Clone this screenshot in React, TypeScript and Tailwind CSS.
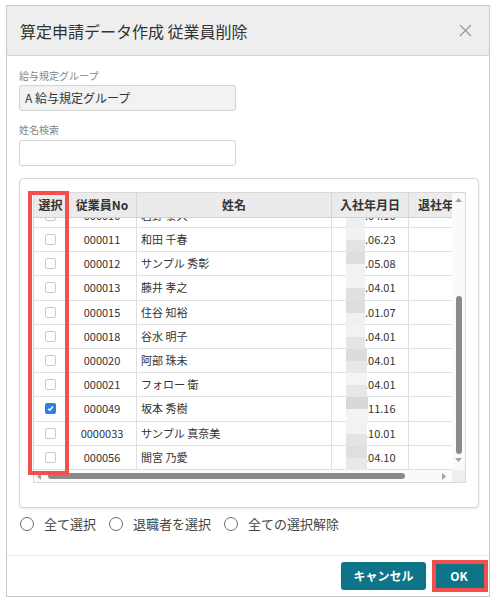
import React from "react";

const rows = [
  { no: "000010", name: "岩野 泰久", date: ".04.10", checked: false, shade: ["#e2e2e2", "#efefef"], bw: 19 },
  { no: "000011", name: "和田 千春", date: ".06.23", checked: false, shade: ["#f1f1f1", "#e3e3e3"], bw: 19 },
  { no: "000012", name: "サンプル 秀彰", date: ".05.08", checked: false, shade: ["#dedede", "#f2f2f2"], bw: 19 },
  { no: "000013", name: "藤井 孝之", date: ".04.01", checked: false, shade: ["#f3f3f3", "#e0e0e0"], bw: 19 },
  { no: "000015", name: "住谷 知裕", date: ".01.07", checked: false, shade: ["#dddddd", "#f0f0f0"], bw: 19 },
  { no: "000018", name: "谷水 明子", date: ".04.01", checked: false, shade: ["#f2f2f2", "#e4e4e4"], bw: 19 },
  { no: "000020", name: "阿部 珠未", date: ".04.01", checked: false, shade: ["#dcdcdc", "#e8e8e8"], bw: 21 },
  { no: "000021", name: "フォロー 衛", date: ".04.01", checked: false, shade: ["#f4f4f4", "#e6e6e6"], bw: 21 },
  { no: "000049", name: "坂本 秀樹", date: ".11.16", checked: true, shade: ["#d8d8d8", "#f3f3f3"], bw: 22 },
  { no: "0000033", name: "サンプル 真奈美", date: ".10.01", checked: false, shade: ["#f2f2f2", "#e4e4e4"], bw: 21 },
  { no: "000056", name: "間宮 乃愛", date: ".04.10", checked: false, shade: ["#dfdfdf", "#e9e9e9"], bw: 21 },
];

function Checkbox({ checked }: { checked: boolean }) {
  if (checked) {
    return (
      <span className="flex h-[11px] w-[11px] items-center justify-center rounded-[2px] bg-[#2d7fe6]">
        <svg width="7" height="7" viewBox="0 0 8 8">
          <path d="M1.2 4.2 L3.2 6 L6.8 1.8" fill="none" stroke="#fff" strokeWidth="1.6" />
        </svg>
      </span>
    );
  }
  return <span className="block h-[11px] w-[11px] rounded-[2px] border border-[#cacaca] bg-white" />;
}

function Radio({ label }: { label: string }) {
  return (
    <label className="flex items-center gap-[10px]">
      <span className="block h-[14px] w-[14px] rounded-full border border-[#6b6b6b] bg-white" />
      <span className="text-[13px] leading-4 text-[#444]">{label}</span>
    </label>
  );
}

export default function App() {
  const cols = "grid grid-cols-[34px_69px_195px_77px_43px]";
  return (
    <div className="relative h-[603px] w-[496px] bg-white px-[6px] pt-[5px] font-['Noto_Sans_CJK_JP',sans-serif] text-[#333]">
      <div className="flex h-[592px] w-[484px] flex-col border border-[#c9c9c9]">
        {/* header */}
        <div className="flex h-[50px] shrink-0 items-center justify-between border-b border-[#d4d4d4] bg-[#eeeeee] pl-[13px] pr-[17px]">
          <h1 className="text-[16px] leading-6 font-normal text-[#333]">算定申請データ作成 従業員削除</h1>
          <svg width="13" height="13" viewBox="0 0 13 13">
            <path d="M1 1 L12 12 M12 1 L1 12" stroke="#9a9a9a" strokeWidth="1.3" />
          </svg>
        </div>

        {/* body */}
        <div className="flex-1 pl-[12px] pr-[10px] pt-[13px]">
          <div className="text-[10px] leading-[14px] text-[#888]">給与規定グループ</div>
          <div className="mt-[2px] flex h-[26px] w-[217px] items-center rounded-[3px] border border-[#d2d2d2] bg-[#f2f2f2] px-[5px] text-[12px]">
            A 給与規定グループ
          </div>
          <div className="mt-[12px] text-[10px] leading-[14px] text-[#888]">姓名検索</div>
          <div className="mt-[3px] h-[26px] w-[217px] rounded-[3px] border border-[#d2d2d2] bg-white" />

          {/* table panel */}
          <div className="mt-[12px] h-[330px] w-[460px] rounded-[4px] border border-[#d6d6d6] pl-[13px] pt-[13px] shadow-[0_1px_2px_rgba(0,0,0,0.08)]">
            <div className="flex h-[291px] w-[433px] flex-col border border-[#d9d9d9]">
              <div className="flex h-[277px]">
                <div className="w-[418px] overflow-hidden">
                  {/* header row */}
                  <div className={`${cols} h-[25px] border-b border-[#d0d0d0] bg-[#ebebeb] text-[12px] font-bold leading-[24px]`}>
                    <div className="border-r border-[#d6d6d6] text-center">選択</div>
                    <div className="border-r border-[#d6d6d6] text-center">従業員No</div>
                    <div className="border-r border-[#d6d6d6] text-center">姓名</div>
                    <div className="border-r border-[#d6d6d6] text-center">入社年月日</div>
                    <div className="overflow-hidden whitespace-nowrap pl-[9px]">退社年月日</div>
                  </div>
                  {/* body rows */}
                  <div className="h-[252px] overflow-hidden">
                    <div className="mt-[-14.2px]">
                      {rows.map((r) => (
                        <div
                          key={r.no}
                          className={`${cols} h-[24.2px] border-b border-[#e0e0e0] text-[11px] leading-[23px]`}
                        >
                          <div className="flex items-center justify-center border-r border-[#e0e0e0]">
                            <Checkbox checked={r.checked} />
                          </div>
                          <div className="border-r border-[#e0e0e0] text-center">{r.no}</div>
                          <div className="border-r border-[#e0e0e0] pl-[4px]">{r.name}</div>
                          <div className="relative border-r border-[#e0e0e0] pl-[33px]">
                            {r.date}
                            <div
                              className="absolute bottom-[-1px] left-[14px] top-0 flex flex-col"
                              style={{ width: r.bw }}
                            >
                              <div className="flex-1" style={{ background: r.shade[0] }} />
                              <div className="flex-1" style={{ background: r.shade[1] }} />
                            </div>
                          </div>
                          <div />
                        </div>
                      ))}
                    </div>
                  </div>
                </div>
                {/* vertical scrollbar */}
                <div className="relative flex w-[13px] flex-col items-center bg-[#fafafa]">
                  <svg className="mt-[5px]" width="7" height="4" viewBox="0 0 7 4">
                    <path d="M0 4 L3.5 0 L7 4 Z" fill="#a3a3a3" />
                  </svg>
                  <div className="mt-[94px] h-[158px] w-[6px] rounded-full bg-[#8a8a8a]" />
                  <svg className="mt-[4px]" width="7" height="4" viewBox="0 0 7 4">
                    <path d="M0 0 L7 0 L3.5 4 Z" fill="#a3a3a3" />
                  </svg>
                </div>
              </div>
              {/* horizontal scrollbar */}
              <div className="flex h-[12px]">
                <div className="flex w-[418px] items-center bg-[#fafafa]">
                  <svg className="ml-[3px]" width="4" height="7" viewBox="0 0 4 7">
                    <path d="M4 0 L0 3.5 L4 7 Z" fill="#a3a3a3" />
                  </svg>
                  <div className="ml-[7px] h-[6px] w-[357px] rounded-full bg-[#8a8a8a]" />
                  <svg className="ml-[37px]" width="4" height="7" viewBox="0 0 4 7">
                    <path d="M0 0 L4 3.5 L0 7 Z" fill="#a3a3a3" />
                  </svg>
                </div>
                <div className="w-[13px] bg-[#eeeeee]" />
              </div>
            </div>
          </div>

          {/* radios */}
          <div className="mt-[8px] flex h-[16px] items-center gap-[13px] pl-[1px]">
            <Radio label="全て選択" />
            <Radio label="退職者を選択" />
            <Radio label="全ての選択解除" />
          </div>
        </div>

        {/* footer */}
        <div className="flex h-[41px] shrink-0 items-center justify-end gap-[7px] border-t border-[#ececec] pr-[4px]">
          <button className="h-[28px] w-[85px] rounded-[3px] bg-[#0e7488] text-[12px] font-bold text-white">
            キャンセル
          </button>
          <button className="h-[28px] w-[52px] rounded-[3px] bg-[#0e7488] text-[12px] font-bold text-white">
            OK
          </button>
        </div>
      </div>

      {/* annotation highlights */}
      <div className="pointer-events-none absolute left-[28px] top-[191px] h-[284px] w-[41px] border-[4px] border-[#f24f4f]" />
      <div className="pointer-events-none absolute left-[432px] top-[560px] h-[32px] w-[56px] border-[4px] border-[#f24f4f]" />
    </div>
  );
}
